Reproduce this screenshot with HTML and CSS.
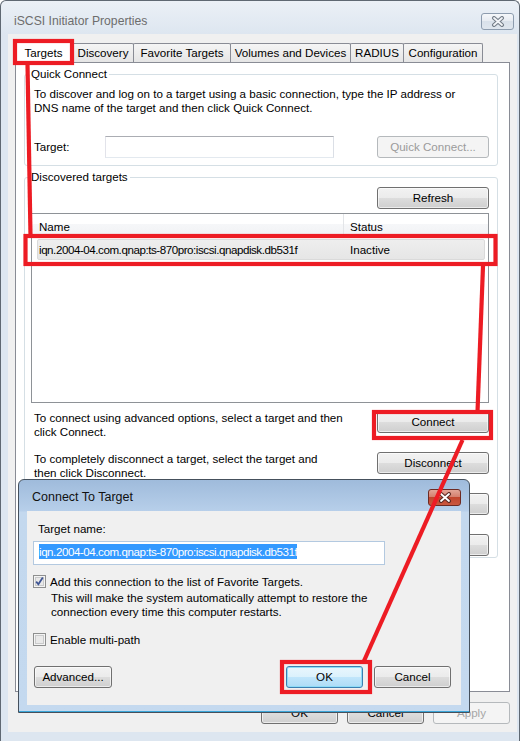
FILE: index.html
```html
<!DOCTYPE html>
<html lang="en">
<head>
  <meta charset="UTF-8">
  <title>iSCSI Initiator Properties</title>
  <link rel="stylesheet" href="styles.css">
</head>
<body>
 <div class="window">
   <div class="titlebar">
     <span class="title">iSCSI Initiator Properties</span>
     <span class="closeBtn">
       <svg width="14" height="11" viewBox="0 0 14 11">
         <path class="xOut" d="M3 2 L11 9 M11 2 L3 9"/>
         <path class="xIn" d="M3 2 L11 9 M11 2 L3 9"/>
       </svg>
     </span>
   </div>

   <div class="client">
     <div class="tabs">
       <div class="tab active">Targets</div>
       <div class="tab tabDiscovery">Discovery</div>
       <div class="tab tabFavorite">Favorite Targets</div>
       <div class="tab tabVolumes">Volumes and Devices</div>
       <div class="tab tabRadius">RADIUS</div>
       <div class="tab tabConfig">Configuration</div>
     </div>

     <div class="tabpanel">
       <!-- quick connect -->
       <fieldset class="group quick">
         <legend>Quick Connect</legend>
         <p class="desc">To discover and log on to a target using a basic connection, type the IP address or<br>DNS name of the target and then click Quick Connect.</p>
         <div class="targetRow">
           <span class="targetLabel">Target:</span>
           <span class="textbox"></span>
           <button class="btn wide" disabled>Quick Connect...</button>
         </div>
       </fieldset>

       <!-- discovered targets -->
       <fieldset class="group discovered">
         <legend>Discovered targets</legend>
         <div class="refreshRow"><button class="btn wide">Refresh</button></div>
         <div class="listview">
           <div class="lvHead">
             <span class="colName">Name</span>
             <span class="colStatus">Status</span>
           </div>
           <div class="lvRow selected">
             <span class="colName iqn">iqn.2004-04.com.qnap:ts-870pro:iscsi.qnapdisk.db531f</span>
             <span class="colStatus">Inactive</span>
           </div>
         </div>
         <div class="action first">
           <p>To connect using advanced options, select a target and then<br>click Connect.</p>
           <button class="btn wide">Connect</button>
         </div>
         <div class="action">
           <p>To completely disconnect a target, select the target and<br>then click Disconnect.</p>
           <button class="btn wide">Disconnect</button>
         </div>
         <!-- these two rows sit under the dialog -->
         <div class="action">
           <button class="btn wide">Properties...</button>
         </div>
         <div class="action last">
           <button class="btn wide">Devices...</button>
         </div>
       </fieldset>
     </div>

     <div class="footer">
       <button class="btn">OK</button>
       <button class="btn">Cancel</button>
       <button class="btn" disabled>Apply</button>
     </div>
   </div>
 </div>

 <!-- modal on top -->
 <div class="dialog">
   <div class="dlgTitlebar">
     <span class="dlgTitle">Connect To Target</span>
     <span class="dlgClose">
       <svg width="14" height="11" viewBox="0 0 14 11">
         <path class="xOutRed" d="M3 2 L11 9 M11 2 L3 9"/>
         <path class="xInRed" d="M3 2 L11 9 M11 2 L3 9"/>
       </svg>
     </span>
   </div>
   <div class="dlgBody">
     <div class="fieldLabel">Target name:</div>
     <div class="dlgTextbox"><span class="sel iqn">iqn.2004-04.com.qnap:ts-870pro:iscsi.qnapdisk.db531f</span></div>
     <div class="checkRow">
       <svg class="checkbox" width="13" height="13" viewBox="0 0 13 13">
         <rect x="0.5" y="0.5" width="12" height="12" fill="#f4f4f4" stroke="#8e8f8f"/>
         <rect x="2.5" y="2.5" width="8" height="8" fill="#e9e9e9" stroke="#c9cacb"/>
         <path d="M3.2 6.6 L5.4 9.3 L9.8 2.6" fill="none" stroke="#3f5594" stroke-width="1.8"/>
       </svg>
       <span>Add this connection to the list of Favorite Targets.</span>
     </div>
     <p class="note">This will make the system automatically attempt to restore the<br>connection every time this computer restarts.</p>
     <div class="checkRow second">
       <svg class="checkbox" width="13" height="13" viewBox="0 0 13 13">
         <rect x="0.5" y="0.5" width="12" height="12" fill="#f4f4f4" stroke="#8e8f8f"/>
         <rect x="2.5" y="2.5" width="8" height="8" fill="#e9e9e9" stroke="#c9cacb"/>
       </svg>
       <span>Enable multi-path</span>
     </div>
     <div class="dlgButtons">
       <button class="btn dlgBtn advanced">Advanced...</button>
       <button class="btn dlgBtn btnDefault">OK</button>
       <button class="btn dlgBtn cancel">Cancel</button>
     </div>
   </div>
 </div>

 <!-- red annotations -->
 <svg class="marks" width="526" height="741" viewBox="0 0 526 741">
   <rect x="15" y="41" width="57" height="22"/>
   <line x1="27.5" y1="64" x2="30.5" y2="236"/>
   <rect x="25.5" y="236" width="470" height="28"/>
   <line x1="483" y1="266" x2="477.5" y2="412"/>
   <rect x="374" y="412" width="117" height="26"/>
   <line x1="462.5" y1="440" x2="363.5" y2="662"/>
   <rect x="282" y="662" width="88" height="30"/>
 </svg>
</body>
</html>
```

FILE: styles.css
```css
*{box-sizing:border-box}
html,body{margin:0;padding:0}
body{width:526px;height:741px;overflow:hidden;position:relative;background:#fff;
     font:11.6px/14px "Liberation Sans",Arial,sans-serif;color:#000}
p{margin:0}

/* ---- main window ---- */
.window{width:520px;height:760px;border:1px solid #5f6872;border-bottom:none;
        border-radius:6px 6px 0 0;padding:0 2px 0 7px;
        background:linear-gradient(#ebf0f6,#dde6f0 34px,#dde6f0)}
.titlebar{height:33px;display:flex;justify-content:space-between;align-items:flex-start}
.title{margin:13px 0 0 6px;font-size:12.2px;line-height:14px;color:#6d6d6d}
.closeBtn{margin:12px 3px 0 0;width:33px;height:17px;border:1px solid #8d9cae;border-radius:3px;
          background:linear-gradient(#f5f7fa,#e6ebf1 50%,#d9e1ea 50%,#dfe6ee);
          display:flex;align-items:center;justify-content:center}
.xOut{fill:none;stroke:#747d88;stroke-width:4;stroke-linecap:round}
.xIn{fill:none;stroke:#f3f5f8;stroke-width:1.8;stroke-linecap:round}

.client{height:698px;background:#f0f0f0;padding:9px 7px 0 6px}

/* tabs */
.tabs{display:flex;align-items:flex-end;height:19px;position:relative;z-index:1}
.tab{height:19px;border:1px solid #898c95;border-bottom:none;border-radius:2px 2px 0 0;
     margin-left:-1px;background:linear-gradient(#f5f5f5,#e5e5e5);
     display:flex;align-items:center;justify-content:center;white-space:nowrap}
.tab.active{margin-left:0;width:59px;height:22px;margin-bottom:-1px;background:#fff;z-index:2}
.tabDiscovery{width:62px}
.tabFavorite{width:98px}
.tabVolumes{width:121px}
.tabRadius{width:54px}
.tabConfig{width:80px}

.tabpanel{margin-left:1px;height:630px;background:#fff;border:1px solid #898c95;padding:4px 11px 0 8px}

/* group boxes */
.group{margin:0;min-width:0;border:1px solid #d5dfe5;border-radius:3px}
.group legend{padding:0 2px;line-height:14px}
.quick{padding:6px 8px 7px 9px}
.quick legend{margin-left:-5px}
.desc{white-space:nowrap}
.targetRow{margin-top:21px;display:flex;align-items:center;height:22px}
.targetLabel{width:71px}
.textbox{width:229px;height:22px;border:1px solid;border-color:#abadb3 #dbdfe6 #e3e9ef #e2e3ea;background:#fff}

.discovered{margin-top:4px;padding:3px 8px 0 6px}
.discovered legend{margin-left:-2px}
.refreshRow{display:flex;justify-content:flex-end}

.btn{font:inherit;color:#000;height:22px;padding:0;border:1px solid #707070;border-radius:3px;
     background:linear-gradient(#f2f2f2,#ebebeb 50%,#dddddd 50%,#cfcfcf);
     box-shadow:inset 0 0 0 1px rgba(255,255,255,.6)}
.btn:disabled{color:#9b9b9b;border-color:#b5b9bc;background:#f4f4f4;box-shadow:none}
.wide{width:112px;margin-left:auto}

/* the target id is set tighter than body text */
.iqn{letter-spacing:-.45px}

/* list view */
.listview{margin-top:4px;height:190px;border:1px solid #8e9297;background:#fff}
.lvHead{display:grid;grid-template-columns:312px 1fr;height:23px;padding-top:3px;line-height:20px;
        background:linear-gradient(#fff 45%,#f6f7f9 45%,#f1f2f4);border-bottom:1px solid #e3e5e8}
.lvHead .colName{padding-left:7px;border-right:1px solid #e3e5e8;margin-top:-3px;padding-top:3px}
.lvHead .colStatus{padding-left:6px}
.lvRow{display:grid;grid-template-columns:306px 1fr;margin:2px 3px 0 5px;height:21px;line-height:19px;
       border:1px solid #dadada;border-radius:2px;background:linear-gradient(#eeeeee,#e6e6e6)}
.lvRow .colName{padding-left:1px}
.lvRow .colStatus{padding-left:6px}

.action{display:flex;align-items:flex-start;height:29px;margin-top:12px}
.action.first{margin-top:8px}
.action p{margin:0 0 0 3px;line-height:13.5px;white-space:nowrap}
.action.last{height:23px}

.footer{margin-top:10px;display:flex;justify-content:flex-end;gap:9px}
.footer .btn{width:77px}
.footer .btn:disabled{color:#a6a6a6}

/* ---- connect to target dialog ---- */
.dialog{position:absolute;left:18px;top:479px;width:452px;height:234px;z-index:5;
        border:1px solid #45505c;border-radius:6px 6px 0 0;padding:0 8px 7px 8px;
        background:linear-gradient(#9fbbdb,#b7cfea 31px,#c3d8ee 32px,#c4d9ef);
        box-shadow:inset 0 -1px 0 #3ba6d8}
.dlgTitlebar{height:31px;display:flex;justify-content:space-between;align-items:flex-start}
.dlgTitle{margin:9px 0 0 5px;font-size:12.5px;line-height:16px;color:#111}
.dlgClose{margin-top:9px;width:33px;height:17px;border:1px solid #6e2a22;border-radius:3px;
          background:linear-gradient(#e3a597,#d5806f 45%,#c2452d 50%,#c9583f);
          display:flex;align-items:center;justify-content:center}
.xOutRed{fill:none;stroke:#5b2a24;stroke-width:4;stroke-linecap:round}
.xInRed{fill:none;stroke:#fff;stroke-width:1.8;stroke-linecap:round}

.dlgBody{height:194px;background:#f0f0f0;padding:11px 10px 0 6px}
.fieldLabel{padding-left:5px}
.dlgTextbox{margin-top:5px;width:352px;height:24px;border:1px solid #b3c9e0;background:#fff;
            padding:2px 0 0 5px}
.sel{background:#3399ff;color:#fff;line-height:15px;display:inline-block}
.checkRow{margin-top:10px;display:flex;align-items:flex-start;height:14px}
.checkRow span{margin-left:4px;line-height:14px}
.checkRow.second{margin-top:15px}
.checkbox{flex:none}
.note{margin:2px 0 0 18px;line-height:13.5px;white-space:nowrap}
.dlgButtons{margin-top:19px;display:flex}
.dlgBtn{width:77px}
.advanced{width:78px;margin-left:1px}
.btnDefault{margin-left:auto;border-color:#3c7fb1;
            background:linear-gradient(#e9f6fd,#dbf1fc 50%,#c1e6fb 50%,#aedcf6);
            box-shadow:inset 0 0 0 1px #8edcf7}
.cancel{margin-left:11px}

/* annotations */
.marks{position:absolute;left:0;top:0;z-index:10;pointer-events:none}
.marks rect,.marks line{fill:none;stroke:#ed1c24;stroke-width:4.2}
```
